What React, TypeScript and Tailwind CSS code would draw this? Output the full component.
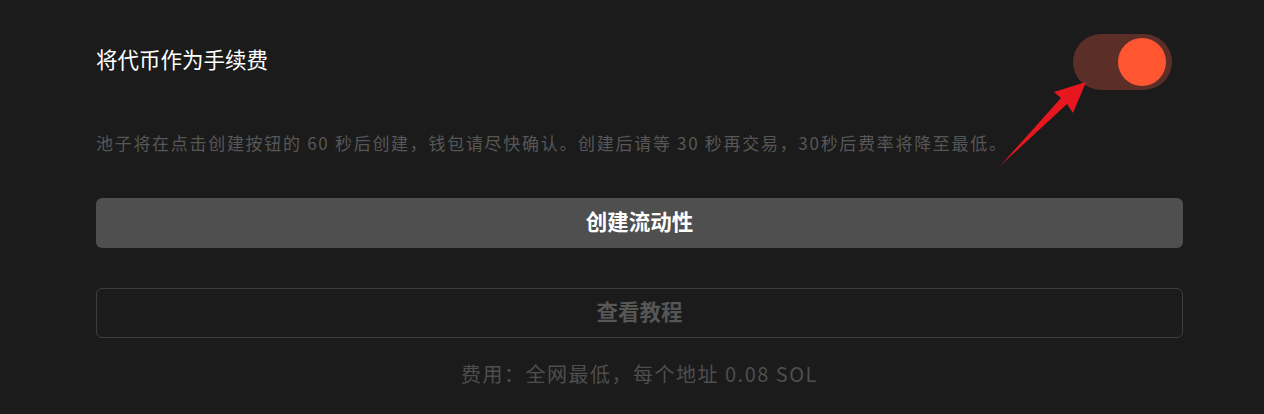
import React from "react";

export default function App() {
  const font = { fontFamily: '"Noto Sans CJK SC", "Noto Sans", sans-serif' };
  return (
    <div className="relative w-full h-[414px] bg-[#1b1b1b] pl-[96px] pr-[81px] pt-[34px] overflow-hidden" style={font}>
      <div className="flex items-center justify-between">
        <div className="text-[21.5px] leading-[28px] mb-[6px] text-white">将代币作为手续费</div>
        <div className="mr-[11px] w-[99px] h-[56px] rounded-full bg-[#5b2f28] flex items-center justify-end pr-[6px]">
          <div className="w-[48px] h-[48px] rounded-full bg-[#ff5631]" />
        </div>
      </div>
      <div className="mt-[41px] text-[17px] leading-[24px] tracking-[1.7px] text-[#575757] whitespace-nowrap">
        池子将在点击创建按钮的 60 秒后创建，钱包请尽快确认。创建后请等 30 秒再交易，30秒后费率将降至最低。
      </div>
      <button className="mt-[43px] w-full h-[50px] rounded-[6px] bg-[#4f4f4f] text-white text-[21.5px] font-bold flex items-center justify-center pb-[3px]">
        创建流动性
      </button>
      <button className="mt-[40px] w-full h-[50px] rounded-[6px] border border-[#3d3d3d] text-[#565656] text-[21.5px] font-bold flex items-center justify-center pb-[3px]">
        查看教程
      </button>
      <div className="mt-[22px] text-center text-[20px] leading-[28px] tracking-[1.5px] text-[#4e4e4e]">
        费用：全网最低，每个地址 0.08 SOL
      </div>
      <svg className="absolute left-0 top-0 pointer-events-none" width="1264" height="414" viewBox="0 0 1264 414">
        <polygon
          points="1000,166 1061,98 1054,92 1086,82 1073,113 1067,104"
          fill="#e8161f"
        />
      </svg>
    </div>
  );
}
